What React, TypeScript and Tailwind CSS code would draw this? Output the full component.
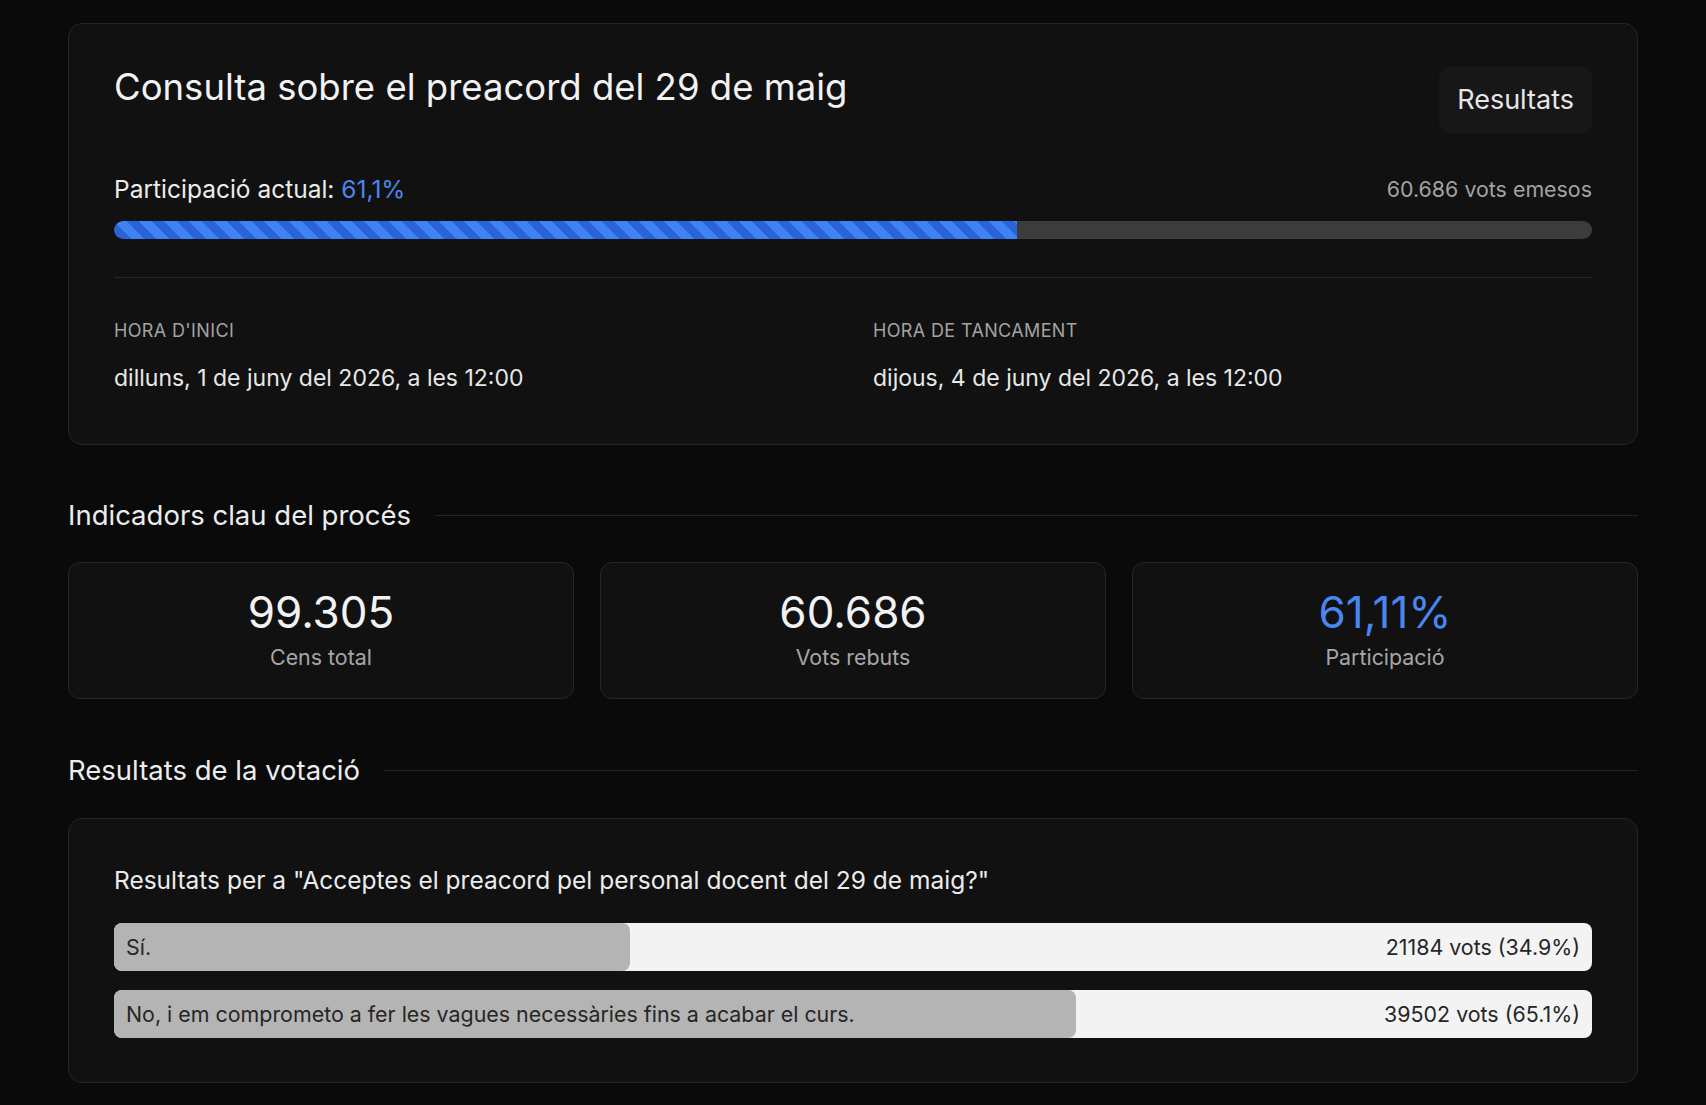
import React from "react";

const results = [
  { label: "Sí.", votes: 21184, pct: 34.9 },
  { label: "No, i em comprometo a fer les vagues necessàries fins a acabar el curs.", votes: 39502, pct: 65.1 },
];

function SectionHeading({ title, top }: { title: string; top: string }) {
  return (
    <div className={"flex items-center gap-[24px] h-[32px] " + top}>
      <h2 className="text-[27.5px] leading-[32px] text-[#ececec] font-normal whitespace-nowrap">{title}</h2>
      <div className="flex-1 h-px bg-[#232323]" />
    </div>
  );
}

function Stat({ value, label, blue }: { value: string; label: string; blue?: boolean }) {
  return (
    <div className="h-[137px] pb-[4px] rounded-[12px] border border-[#272727] bg-[#111111] flex flex-col items-center justify-center">
      <div className={"text-[44px] leading-[48px] font-normal " + (blue ? "text-[#4a86f0]" : "text-[#f2f2f2]")}>{value}</div>
      <div className="mt-[8px] text-[21.4px] leading-[26px] text-[#a6a6a6]">{label}</div>
    </div>
  );
}

export default function App() {
  return (
    <div className="min-h-screen bg-[#0a0a0b] font-['Inter',sans-serif] px-[68px] pt-[23px] pb-[23px]">
      <div className="rounded-[14px] border border-[#252525] bg-[#111111] px-[45px] pt-[43px] pb-[52px]">
        <div className="flex justify-between items-start">
          <h1 className="text-[36.5px] leading-[40px] text-[#f2f2f2] font-normal">
            Consulta sobre el preacord del 29 de maig
          </h1>
          <button className="h-[66px] px-[18px] rounded-[10px] bg-[#171717] text-[27px] text-[#e6e6e6]">
            Resultats
          </button>
        </div>
        <div className="mt-[42px] flex justify-between items-center h-[28px]">
          <div className="text-[24.5px] leading-[28px] text-[#ececec]">
            Participació actual: <span className="text-[#4a86f0]">61,1%</span>
          </div>
          <div className="text-[21.4px] leading-[28px] text-[#a3a3a3]">60.686 vots emesos</div>
        </div>
        <div className="mt-[18px] h-[18px] rounded-full bg-[#3c3c3c] overflow-hidden">
          <div
            className="h-full rounded-l-full bg-[#2a62d8] bg-[linear-gradient(45deg,#3f82f6_25%,transparent_25%,transparent_50%,#3f82f6_50%,#3f82f6_75%,transparent_75%,transparent)] bg-[length:25px_25px]"
            style={{ width: "61.1%" }}
          />
        </div>
        <div className="mt-[38px] h-px bg-[#272727]" />
        <div className="mt-[43px] grid grid-cols-2 gap-[40px]">
          <div>
            <div className="text-[18px] leading-[20px] text-[#a3a3a3] uppercase tracking-[0.02em]">Hora d'inici</div>
            <div className="mt-[23px] text-[23px] leading-[28px] text-[#e8e8e8]">dilluns, 1 de juny del 2026, a les 12:00</div>
          </div>
          <div>
            <div className="text-[18px] leading-[20px] text-[#a3a3a3] uppercase tracking-[0.02em]">Hora de tancament</div>
            <div className="mt-[23px] text-[23px] leading-[28px] text-[#e8e8e8]">dijous, 4 de juny del 2026, a les 12:00</div>
          </div>
        </div>
      </div>

      <SectionHeading title="Indicadors clau del procés" top="mt-[54px]" />
      <div className="mt-[31px] grid grid-cols-3 gap-[26px]">
        <Stat value="99.305" label="Cens total" />
        <Stat value="60.686" label="Vots rebuts" />
        <Stat value="61,11%" label="Participació" blue />
      </div>

      <SectionHeading title="Resultats de la votació" top="mt-[55px]" />
      <div className="mt-[32px] rounded-[14px] border border-[#252525] bg-[#111111] px-[45px] pt-[47px] pb-[44px]">
        <div className="text-[24.5px] leading-[28px] text-[#ececec]">
          Resultats per a "Acceptes el preacord pel personal docent del 29 de maig?"
        </div>
        <div className="mt-[29px] flex flex-col gap-[19px]">
          {results.map((r) => (
            <div key={r.label} className="relative h-[48px] rounded-[8px] bg-[#f3f3f3] overflow-hidden">
              <div className="absolute inset-y-0 left-0 rounded-[8px] bg-[#b4b4b4]" style={{ width: r.pct + "%" }} />
              <div className="relative h-full flex items-center justify-between px-[12px] text-[21.4px] text-[#262626]">
                <span>{r.label}</span>
                <span>
                  {r.votes} vots ({r.pct}%)
                </span>
              </div>
            </div>
          ))}
        </div>
      </div>
    </div>
  );
}
